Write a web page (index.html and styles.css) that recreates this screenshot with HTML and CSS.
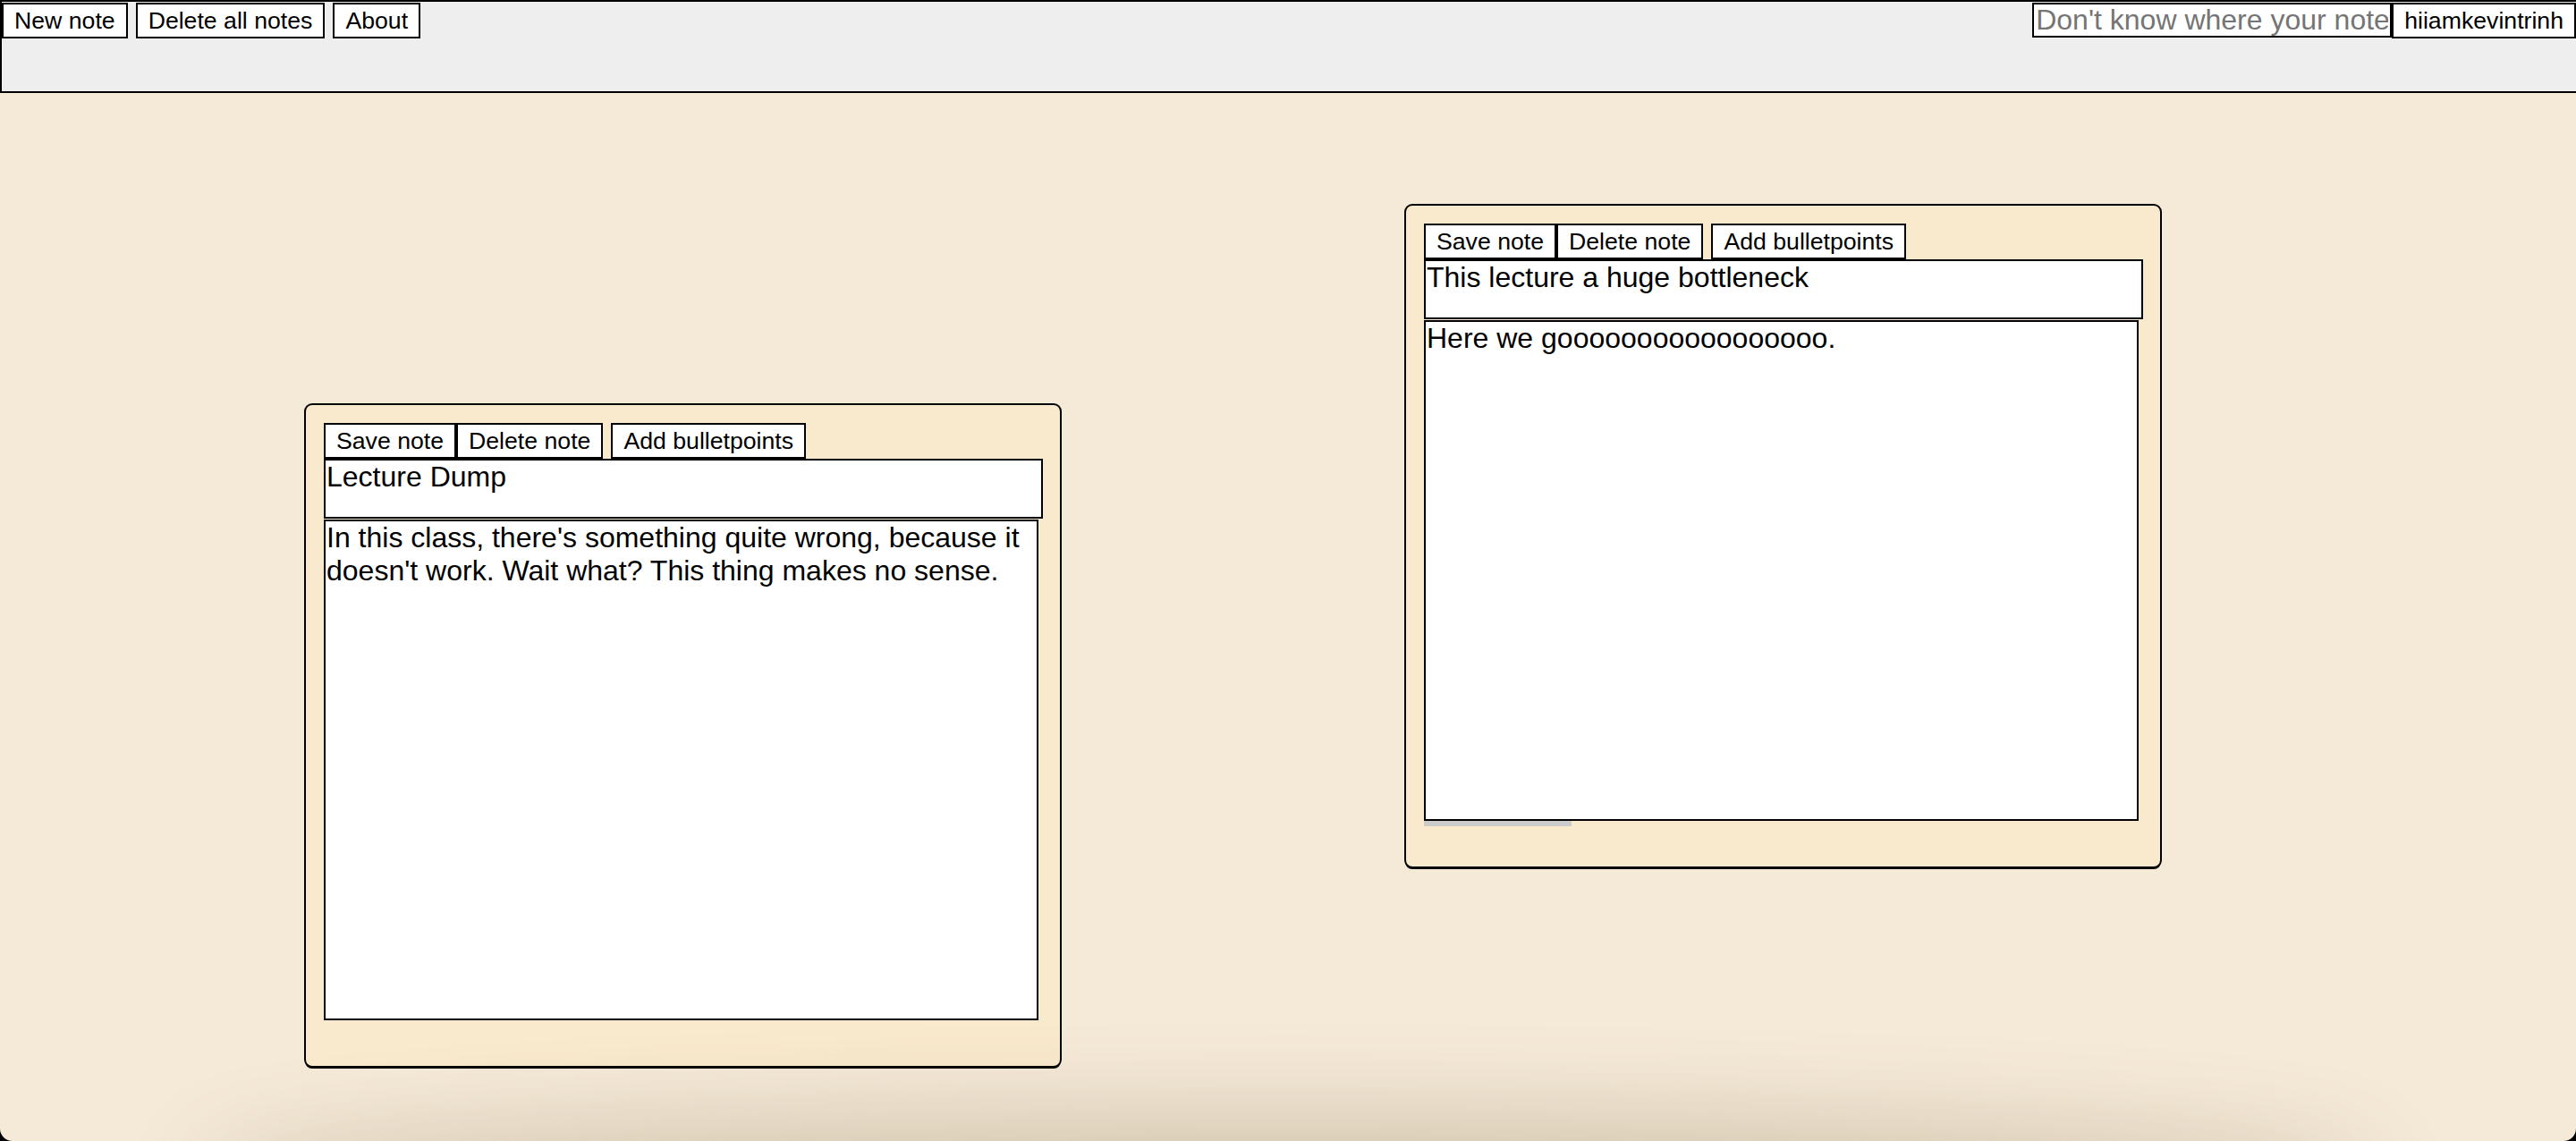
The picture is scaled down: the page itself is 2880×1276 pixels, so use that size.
FILE: index.html
```html
<!DOCTYPE html>
<html lang="en">
<head>
<meta charset="utf-8">
<title>Notes</title>
<link rel="stylesheet" href="styles.css">
</head>
<body>
<div class="app">
  <header class="navbar">
    <div class="nav-left">
      <button class="btn">New note</button>
      <button class="btn">Delete all notes</button>
      <button class="btn">About</button>
    </div>
    <div class="nav-right">
      <input class="search" type="text" placeholder="Don't know where your note is? Search here">
      <button class="btn">hiiamkevintrinh</button>
    </div>
  </header>
  <main class="canvas">
    <section class="note note-one">
      <div class="note-actions">
        <button class="btn">Save note</button>
        <button class="btn">Delete note</button>
        <button class="btn btn-spaced">Add bulletpoints</button>
      </div>
      <textarea class="note-title">Lecture Dump</textarea>
      <textarea class="note-body">In this class, there's something quite wrong, because it doesn't work. Wait what? This thing makes no sense.</textarea>
    </section>
    <section class="note note-two">
      <div class="note-actions">
        <button class="btn">Save note</button>
        <button class="btn">Delete note</button>
        <button class="btn btn-spaced">Add bulletpoints</button>
      </div>
      <textarea class="note-title">This lecture a huge bottleneck</textarea>
      <textarea class="note-body">Here we gooooooooooooooooo.</textarea>
      <div class="scroll-strip"></div>
    </section>
    <div class="bottom-shade"></div>
  </main>
</div>
</body>
</html>
```
FILE: styles.css
```css
html {
  background: #000;
}
body {
  margin: 0;
  font-family: "Liberation Sans", Arial, sans-serif;
}
.app {
  height: 1276px;
  background: #f5e9d8;
  border-radius: 0 0 14px 14px;
  overflow: hidden;
  display: flex;
  flex-direction: column;
}
.navbar {
  box-sizing: border-box;
  height: 104px;
  background: #eeeeee;
  border: 2px solid #000;
  border-right: none;
  display: flex;
  justify-content: space-between;
  align-items: flex-start;
  padding-top: 1px;
}
.nav-left {
  display: flex;
  gap: 9px;
}
.nav-right {
  display: flex;
  align-items: flex-start;
}
.btn {
  font-family: "Liberation Sans", Arial, sans-serif;
  font-size: 26.67px;
  line-height: 1.15;
  color: #000;
  background: #fff;
  border: 2px solid #000;
  padding: 2px 12px;
  margin: 0;
  border-radius: 0;
  height: 40px;
  box-sizing: border-box;
}
.search {
  box-sizing: border-box;
  width: 402px;
  height: 39px;
  margin: 0;
  font-family: "Liberation Sans", Arial, sans-serif;
  font-size: 32px;
  padding: 0 2px;
  border: 2px solid #000;
  background: #fff;
  color: #000;
  outline: none;
}
.search::placeholder {
  color: #757575;
}
.canvas {
  position: relative;
  flex: 1;
}
.note {
  position: absolute;
  box-sizing: border-box;
  width: 847px;
  height: 743px;
  background: #f9e9cd;
  border: 2px solid #000;
  border-radius: 9px;
  box-shadow: 0 2px 0 -1px #000;
  padding: 20px 20px 0 20px;
  display: flex;
  flex-direction: column;
  align-items: flex-start;
}
.note-one {
  left: 340px;
  top: 347px;
}
.note-two {
  left: 1570px;
  top: 124px;
}
.note-actions {
  display: flex;
  height: 40px;
}
.btn-spaced {
  margin-left: 9px;
}
.note-title,
.note-body {
  box-sizing: border-box;
  margin: 0;
  font-family: "Liberation Sans", Arial, sans-serif;
  font-size: 32px;
  line-height: 1.15;
  color: #000;
  background: #fff;
  border: 2px solid #000;
  padding: 0 1px;
  resize: none;
  outline: none;
  overflow: hidden;
}
.note-title {
  width: 804px;
  height: 67px;
}
.note-body {
  width: 799px;
  height: 560px;
  margin-top: 1px;
}
.scroll-strip {
  width: 165px;
  height: 6px;
  background: #cbcbcb;
}
.bottom-shade {
  position: absolute;
  left: 260px;
  right: 260px;
  bottom: -70px;
  height: 60px;
  border-radius: 50%;
  box-shadow: 0 0 100px 40px rgba(110, 90, 50, 0.24);
  pointer-events: none;
}
```
